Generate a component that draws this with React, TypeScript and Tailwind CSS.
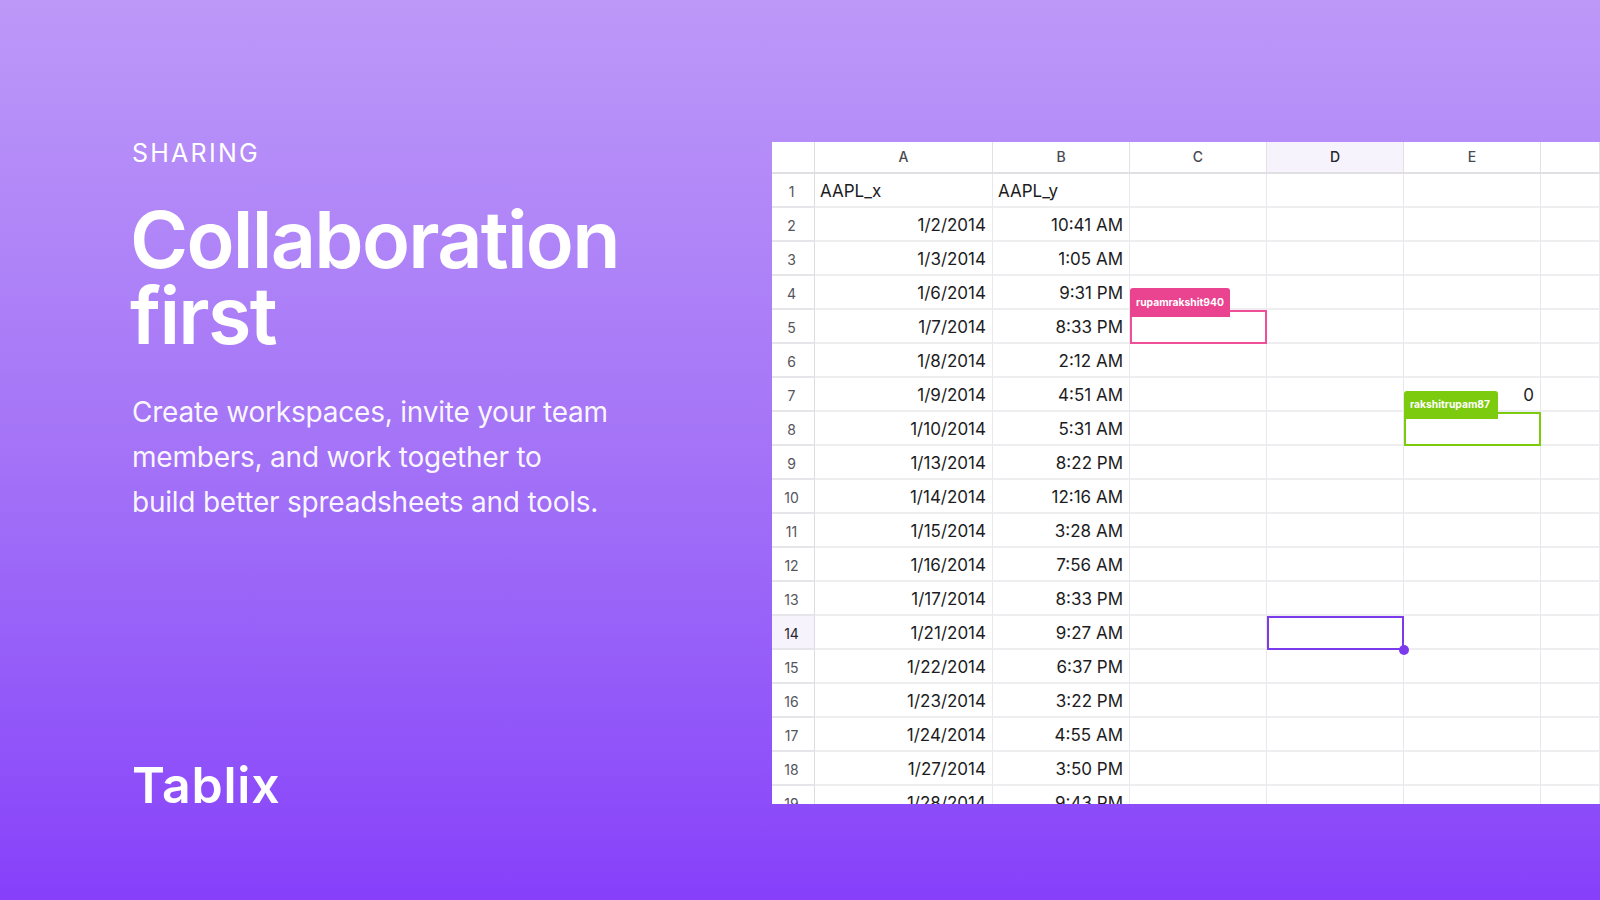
const rows = [
  ["AAPL_x", "AAPL_y"],
  ["1/2/2014", "10:41 AM"],
  ["1/3/2014", "1:05 AM"],
  ["1/6/2014", "9:31 PM"],
  ["1/7/2014", "8:33 PM"],
  ["1/8/2014", "2:12 AM"],
  ["1/9/2014", "4:51 AM"],
  ["1/10/2014", "5:31 AM"],
  ["1/13/2014", "8:22 PM"],
  ["1/14/2014", "12:16 AM"],
  ["1/15/2014", "3:28 AM"],
  ["1/16/2014", "7:56 AM"],
  ["1/17/2014", "8:33 PM"],
  ["1/21/2014", "9:27 AM"],
  ["1/22/2014", "6:37 PM"],
  ["1/23/2014", "3:22 PM"],
  ["1/24/2014", "4:55 AM"],
  ["1/27/2014", "3:50 PM"],
  ["1/28/2014", "9:43 PM"],
];

const columns = ["A", "B", "C", "D", "E", ""];

const Cell = ({ children, left }: { children?: React.ReactNode; left?: boolean }) => (
  <div
    className={`relative flex h-[34px] items-center border-r border-b-2 border-r-[#e8e8ec] border-b-[#eeeef1] px-[6px] pt-[4px] text-[17px] text-[#1c1c22] ${
      left ? "justify-start pl-[5px]" : "justify-end"
    }`}
  >
    {children}
  </div>
);

const Sheet = () => (
  <div className="grid h-[662px] w-[828px] grid-cols-[43px_178px_137px_137px_137px_137px_1fr] content-start overflow-hidden bg-white font-['Inter',sans-serif]">
    <div className="h-[32px] border-r border-b-2 border-r-[#dcdce2] border-b-[#dfdfe4]" />
    {columns.map((col) => (
      <div
        key={col}
        className={`flex h-[32px] items-center justify-center border-r border-b-2 border-r-[#e0e0e5] border-b-[#dfdfe4] pb-[2px] text-[14px] font-medium ${
          col === "D" ? "bg-[#f7f3fd] text-[#26262e]" : "text-[#4a4a52]"
        }`}
      >
        {col}
      </div>
    ))}

    {rows.map((row, i) => {
      const n = i + 1;
      return (
        <div key={n} className="contents">
          <div
            className={`flex h-[34px] items-center justify-center border-r border-b-2 border-r-[#dcdce2] border-b-[#e6e6ea] pt-[2px] pr-[3px] text-[14px] ${
              n === 14 ? "bg-[#f6f3fc] text-[#26262e]" : "text-[#55555d]"
            }`}
          >
            {n}
          </div>
          <Cell left={n === 1}>{row[0]}</Cell>
          <Cell left={n === 1}>{row[1]}</Cell>
          <Cell>
            {n === 5 && (
              <>
                <div className="absolute top-0 right-[-1px] bottom-[-2px] left-0 z-10 border-2 border-[#ee4f98]" />
                <div className="absolute top-[-22px] left-0 z-10 flex h-[29px] w-[100px] items-center rounded-t-[3px] bg-[#ea4390] pl-[6px] text-[10.3px] font-bold text-white">
                  rupamrakshit940
                </div>
              </>
            )}
          </Cell>
          <Cell>
            {n === 14 && (
              <>
                <div className="absolute top-0 right-[-1px] bottom-[-2px] left-0 z-10 border-2 border-[#7c3aed]" />
                <div className="absolute right-[-6px] bottom-[-7px] z-10 h-[10px] w-[10px] rounded-full bg-[#7c3aed]" />
              </>
            )}
          </Cell>
          <Cell>
            {n === 7 && "0"}
            {n === 8 && (
              <>
                <div className="absolute top-0 right-[-1px] bottom-[-2px] left-0 z-10 border-2 border-[#7ccb0e]" />
                <div className="absolute top-[-21px] left-0 z-10 flex h-[28px] w-[94px] items-center rounded-t-[3px] bg-[#7ccb0e] pl-[6px] text-[10.3px] font-bold text-white">
                  rakshitrupam87
                </div>
              </>
            )}
          </Cell>
          <Cell />
        </div>
      );
    })}
  </div>
);

export default function App() {
  return (
    <div className="flex h-[900px] w-[1600px] overflow-hidden bg-gradient-to-b from-[#bd98f8] via-[#a473f7] to-[#873ffa] font-['Inter',sans-serif] text-white">
      <div className="flex w-[772px] flex-col pt-[137px] pl-[132px]">
        <p className="text-[25px] leading-[32px] font-normal tracking-[0.09em]">SHARING</p>
        <h1 className="mt-[32px] ml-[-2px] text-[79px] leading-[76px] font-semibold tracking-[-0.022em]">
          Collaboration
          <br />
          first
        </h1>
        <p className="mt-[37px] text-[28px] leading-[45px] tracking-[-0.008em] text-white/95">
          Create workspaces, invite your team
          <br />
          members, and work together to
          <br />
          build better spreadsheets and tools.
        </p>
        <div className="mt-auto mb-[86px] text-[50px] leading-[58px] font-semibold tracking-[0.015em]">Tablix</div>
      </div>
      <div className="pt-[142px]">
        <Sheet />
      </div>
    </div>
  );
}
